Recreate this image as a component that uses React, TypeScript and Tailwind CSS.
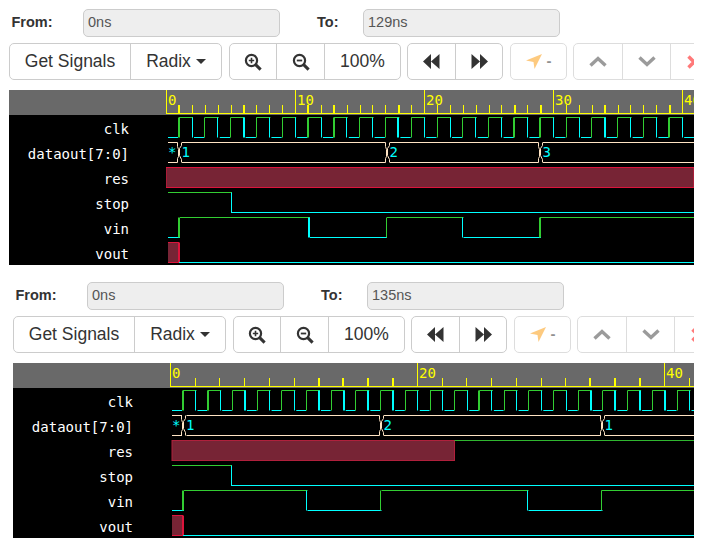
const GREEN = '#32cd32';
const CYAN = '#00ffff';
const BUS = '#ffe4c4';
const RED = '#dc143c';
const FILL = '#772435';
const MONO = '"DejaVu Sans Mono", monospace';
const SANS = '"Liberation Sans", Arial, sans-serif';

const hi = (row: number) => 27.5 + 25 * row;
const lo = (row: number) => 47.5 + 25 * row;

interface WaveProps {
  x0: number;
  end: number;
  tickStep: number;
  tickCount: number;
  tickThick: number[];
  majorEvery: number;
  majorLabel: number;
  clkRise: number;
  clkFall: number;
  clkStep: number;
  clkCount: number;
  riseThick: number[];
  fallThick: number[];
  start: number;
  busEdges: number[];
  busLabels: string[];
  resEnd: number;
  resStroke: string;
  stopFall: number;
  vinEdges: [number, boolean, boolean][];
  voutEnd: number;
}

function Seg({ x1, y1, x2, y2, c, w = 1 }: { x1: number; y1: number; x2: number; y2: number; c: string; w?: number }) {
  return <line x1={x1} y1={y1} x2={x2} y2={y2} stroke={c} strokeWidth={w} />;
}

// vertical edge, snapped to the pixel grid
function Edge({ x, row, c, thick }: { x: number; row: number; c: string; thick?: boolean }) {
  const px = thick ? Math.round(x) : Math.floor(x) + 0.5;
  return <Seg x1={px} y1={hi(row)} x2={px} y2={lo(row)} c={c} w={thick ? 2 : 1} />;
}

function BusEdge({ x }: { x: number }) {
  const t = hi(1);
  const b = lo(1);
  const l = Math.floor(x) - 1.5;
  const r = Math.floor(x) + 2.5;
  const m = Math.floor(x) + 0.5;
  return (
    <g fill="none" stroke={BUS}>
      <path d={`M${l} ${t}V${t + 4}L${m - 1} ${t + 7}V${b - 6}L${l} ${b - 4}V${b}`} />
      <path d={`M${r} ${t}V${t + 3}L${m} ${t + 6}V${b - 7}L${r} ${b - 3}V${b}`} />
    </g>
  );
}

function Wave(p: WaveProps) {
  const width = p.end - p.x0;
  const ticks = Array.from({ length: p.tickCount }, (_, i) => i);
  const clk = Array.from({ length: p.clkCount }, (_, i) => i);
  const vin = p.vinEdges;
  const resFrom = p.resEnd < p.end ? p.start : p.x0;

  return (
    <svg className="block shrink-0" width={width} height={175} viewBox={`${p.x0} 0 ${width} 175`}>
      <rect x={p.x0} y={0} width={width} height={25} fill="#696969" />
      <Seg x1={p.x0} y1={23.5} x2={p.end} y2={23.5} c="#ffff00" />
      {ticks.map((i) => {
        const x = p.x0 + 0.5 + p.tickStep * i;
        const major = i % p.majorEvery === 0;
        const thick = p.tickThick.includes(i);
        const px = thick ? Math.round(x) : Math.floor(x) + 0.5;
        return (
          <g key={i}>
            <Seg x1={px} y1={major ? 0 : 15} x2={px} y2={23} c="#ffff00" w={thick ? 2 : 1} />
            {major && (
              <text x={px + 1.5} y={15} fill="#ffff00" fontSize={14} fontFamily={MONO}>
                {(i / p.majorEvery) * p.majorLabel}
              </text>
            )}
          </g>
        );
      })}

      {/* clk */}
      <Seg x1={p.start} y1={lo(0)} x2={p.clkRise - 1} y2={lo(0)} c={CYAN} />
      {clk.map((i) => {
        const rise = p.clkRise + p.clkStep * i;
        const fall = p.clkFall + p.clkStep * i;
        return (
          <g key={i}>
            <Edge x={rise} row={0} c={GREEN} thick={p.riseThick.includes(i)} />
            <Seg x1={rise} y1={hi(0)} x2={fall + 1} y2={hi(0)} c={GREEN} />
            <Edge x={fall} row={0} c={CYAN} thick={p.fallThick.includes(i)} />
            <Seg x1={fall + 2} y1={lo(0)} x2={rise + p.clkStep - 0.5} y2={lo(0)} c={CYAN} />
          </g>
        );
      })}

      {/* dataout[7:0] */}
      {[p.start, ...p.busEdges].map((x, i) => {
        const from = i === 0 ? x : x + 3;
        const to = p.busEdges[i] !== undefined ? p.busEdges[i] - 1.5 : p.end;
        return (
          <g key={i}>
            <Seg x1={from} y1={hi(1)} x2={to} y2={hi(1)} c={BUS} />
            <Seg x1={from} y1={lo(1)} x2={to} y2={lo(1)} c={BUS} />
            <text x={i === 0 ? x : x + 2.5} y={67} fill={CYAN} fontSize={14} fontFamily={MONO}>
              {p.busLabels[i]}
            </text>
          </g>
        );
      })}
      {p.busEdges.map((x) => (
        <BusEdge key={x} x={x} />
      ))}

      {/* res */}
      <rect x={resFrom} y={hi(2)} width={p.resEnd - resFrom} height={20} fill={FILL} stroke={p.resStroke} />
      {p.resEnd < p.end && <Seg x1={p.resEnd} y1={hi(2)} x2={p.end} y2={hi(2)} c="#2fb62f" />}

      {/* stop */}
      <Seg x1={p.start} y1={hi(3)} x2={p.stopFall + 1} y2={hi(3)} c={GREEN} />
      <Edge x={p.stopFall} row={3} c={CYAN} />
      <Seg x1={p.stopFall} y1={lo(3)} x2={p.end} y2={lo(3)} c={CYAN} />

      {/* vin */}
      {vin.map(([x, rising, thick], i) => {
        const prev = i === 0 ? p.start : vin[i - 1][0] + 1;
        const lineY = rising ? lo(4) : hi(4);
        return (
          <g key={i}>
            <Seg x1={prev} y1={lineY} x2={x + 1} y2={lineY} c={rising ? CYAN : GREEN} />
            <Edge x={x} row={4} c={rising ? GREEN : CYAN} thick={thick} />
          </g>
        );
      })}
      <Seg x1={vin[vin.length - 1][0]} y1={hi(4)} x2={p.end} y2={hi(4)} c={GREEN} />

      {/* vout */}
      <rect x={p.start} y={hi(5)} width={p.voutEnd - p.start} height={20} fill={FILL} />
      <Seg x1={p.start} y1={hi(5)} x2={p.voutEnd} y2={hi(5)} c={RED} />
      <Seg x1={p.start} y1={lo(5)} x2={p.voutEnd} y2={lo(5)} c={RED} />
      <Seg x1={p.voutEnd} y1={hi(5)} x2={p.voutEnd} y2={lo(5)} c={RED} w={2} />
      <Seg x1={p.voutEnd} y1={lo(5)} x2={p.end} y2={lo(5)} c={CYAN} />
    </svg>
  );
}

function ZoomIcon({ minus }: { minus?: boolean }) {
  return (
    <svg width="18" height="18" viewBox="0 0 18 18" fill="none" stroke="#333" strokeWidth="2.2">
      <circle cx="7.5" cy="7.5" r="5.6" />
      <path d="M11.6 11.6L16.6 16.6" strokeWidth="3" />
      {minus ? <path d="M4.8 7.5H10.2" strokeWidth="1.8" /> : <path d="M4.8 7.5H10.2M7.5 4.8V10.2" strokeWidth="1.6" />}
    </svg>
  );
}

function Skip({ back }: { back?: boolean }) {
  return (
    <svg width="17" height="15" viewBox="0 0 17 15" fill="#333">
      {back ? <path d="M0 7.5L8 0V15ZM8 7.5L16.5 0V15Z" /> : <path d="M0.5 0L9 7.5L0.5 15ZM9 0L17 7.5L9 15Z" />}
    </svg>
  );
}

function Label({ children, className }: { children: string; className: string }) {
  return <div className={`flex items-center font-bold text-[14.5px] text-[#333] ${className}`}>{children}</div>;
}

function Field({ value }: { value: string }) {
  return (
    <div className="flex items-center w-[197px] h-[28px] px-1 bg-[#eeeeee] border border-[#cccccc] rounded-[5px] text-[14.5px] text-[#555555] shrink-0">
      {value}
    </div>
  );
}

const groupCls = 'flex h-[37px] shrink-0 bg-white border border-[#cccccc] rounded-[5px] text-[17.5px] text-[#333333]';
const cellCls = 'flex items-center justify-center shrink-0 h-full';

function Toolbar() {
  return (
    <div className="flex mt-[6px] overflow-hidden">
      <div className={`${groupCls} w-[213px]`}>
        <div className={`${cellCls} w-[120px]`}>Get Signals</div>
        <div className={`${cellCls} flex-1 gap-[5px] border-l border-[#cccccc]`}>
          Radix
          <span className="w-0 h-0 border-x-[5.5px] border-x-transparent border-t-[5.5px] border-t-[#333333]" />
        </div>
      </div>
      <div className={`${groupCls} w-[172px] ml-[7px]`}>
        <div className={`${cellCls} w-[46px]`}><ZoomIcon /></div>
        <div className={`${cellCls} w-[48px] border-l border-[#cccccc]`}><ZoomIcon minus /></div>
        <div className={`${cellCls} flex-1 border-l border-[#cccccc]`}>100%</div>
      </div>
      <div className={`${groupCls} w-[96px] ml-[6px]`}>
        <div className={`${cellCls} w-[47px]`}><Skip back /></div>
        <div className={`${cellCls} flex-1 border-l border-[#cccccc]`}><Skip /></div>
      </div>
      <div className={`${groupCls} w-[57px] ml-[7px] opacity-65 items-center justify-center gap-[5px]`}>
        <svg width="16" height="15" viewBox="0 0 16 15" fill="#fdae3c"><path d="M16 0L0 6.5L7.5 8L8.5 15Z" /></svg>
        <span className="text-[15px] font-bold text-[#555555]">-</span>
      </div>
      <div className={`${groupCls} w-[145px] ml-[6px] opacity-65`}>
        <div className={`${cellCls} w-[48px]`}>
          <svg width="18" height="11" viewBox="0 0 18 11" fill="none" stroke="#666" strokeWidth="3.4"><path d="M1.5 9.5L9 2.5L16.5 9.5" /></svg>
        </div>
        <div className={`${cellCls} w-[48px] border-l border-[#cccccc]`}>
          <svg width="18" height="11" viewBox="0 0 18 11" fill="none" stroke="#666" strokeWidth="3.4"><path d="M1.5 1.5L9 8.5L16.5 1.5" /></svg>
        </div>
        <div className={`${cellCls} flex-1 border-l border-[#cccccc]`}>
          <svg width="14" height="14" viewBox="0 0 14 14" fill="none" stroke="#ff3333" strokeWidth="3.4"><path d="M1.5 1.5L12.5 12.5M12.5 1.5L1.5 12.5" /></svg>
        </div>
      </div>
    </div>
  );
}

const signals = ['clk', 'dataout[7:0]', 'res', 'stop', 'vin', 'vout'];

function Viewer({ to, wave, className }: { to: string; wave: WaveProps; className: string }) {
  return (
    <div className={className} style={{ fontFamily: SANS }}>
      <div className="flex pt-[9px]">
        <Label className="w-[74px] pl-[2.5px] shrink-0">From:</Label>
        <Field value="0ns" />
        <Label className="w-[83px] pl-[37px] shrink-0">To:</Label>
        <Field value={to} />
      </div>
      <Toolbar />
      <div className="flex mt-[10px] h-[175px] bg-black overflow-hidden">
        <div className="w-[157px] shrink-0">
          <div className="h-[25px] bg-[#696969]" />
          {signals.map((s) => (
            <div
              key={s}
              className="flex items-center justify-end h-[25px] pt-[4px] pr-[37px] text-[14px] text-white"
              style={{ fontFamily: MONO }}
            >
              {s}
            </div>
          ))}
        </div>
        <Wave {...wave} />
      </div>
    </div>
  );
}

const first: WaveProps = {
  x0: 166,
  end: 694,
  tickStep: 12.9,
  tickCount: 42,
  tickThick: [1, 6, 11, 13, 18, 27, 29, 34, 39],
  majorEvery: 10,
  majorLabel: 10,
  clkRise: 179,
  clkFall: 192,
  clkStep: 25.8,
  clkCount: 20,
  riseThick: [0, 5, 6, 13, 14, 19],
  fallThick: [2, 8, 16],
  start: 168,
  busEdges: [179, 387, 540],
  busLabels: ['*', '1', '2', '3'],
  resEnd: 694,
  resStroke: RED,
  stopFall: 231,
  vinEdges: [
    [179, true, true],
    [309, false, true],
    [386, true, false],
    [462.5, false, false],
    [540, true, true],
  ],
  voutEnd: 179,
};

const second: WaveProps = {
  x0: 170,
  end: 694,
  tickStep: 24.7,
  tickCount: 22,
  tickThick: [6, 7, 8, 9, 17, 18, 19],
  majorEvery: 10,
  majorLabel: 20,
  clkRise: 183,
  clkFall: 195.5,
  clkStep: 24.7,
  clkCount: 21,
  riseThick: [0, 1, 12],
  fallThick: [2, 5, 6, 7, 8, 16, 17, 18, 19],
  start: 172,
  busEdges: [183.5, 381, 602],
  busLabels: ['*', '1', '2', '1'],
  resEnd: 454.5,
  resStroke: '#b0203c',
  stopFall: 231,
  vinEdges: [
    [183, true, true],
    [306.5, false, false],
    [380.5, true, false],
    [527.5, false, false],
    [601.5, true, false],
  ],
  voutEnd: 183,
};

export default function App() {
  return (
    <div className="w-[709px] h-[544px] bg-white overflow-hidden">
      <Viewer to="129ns" wave={first} className="w-[685px] ml-[9px]" />
      <Viewer to="135ns" wave={second} className="w-[681px] ml-[13px] mt-[8px]" />
    </div>
  );
}
